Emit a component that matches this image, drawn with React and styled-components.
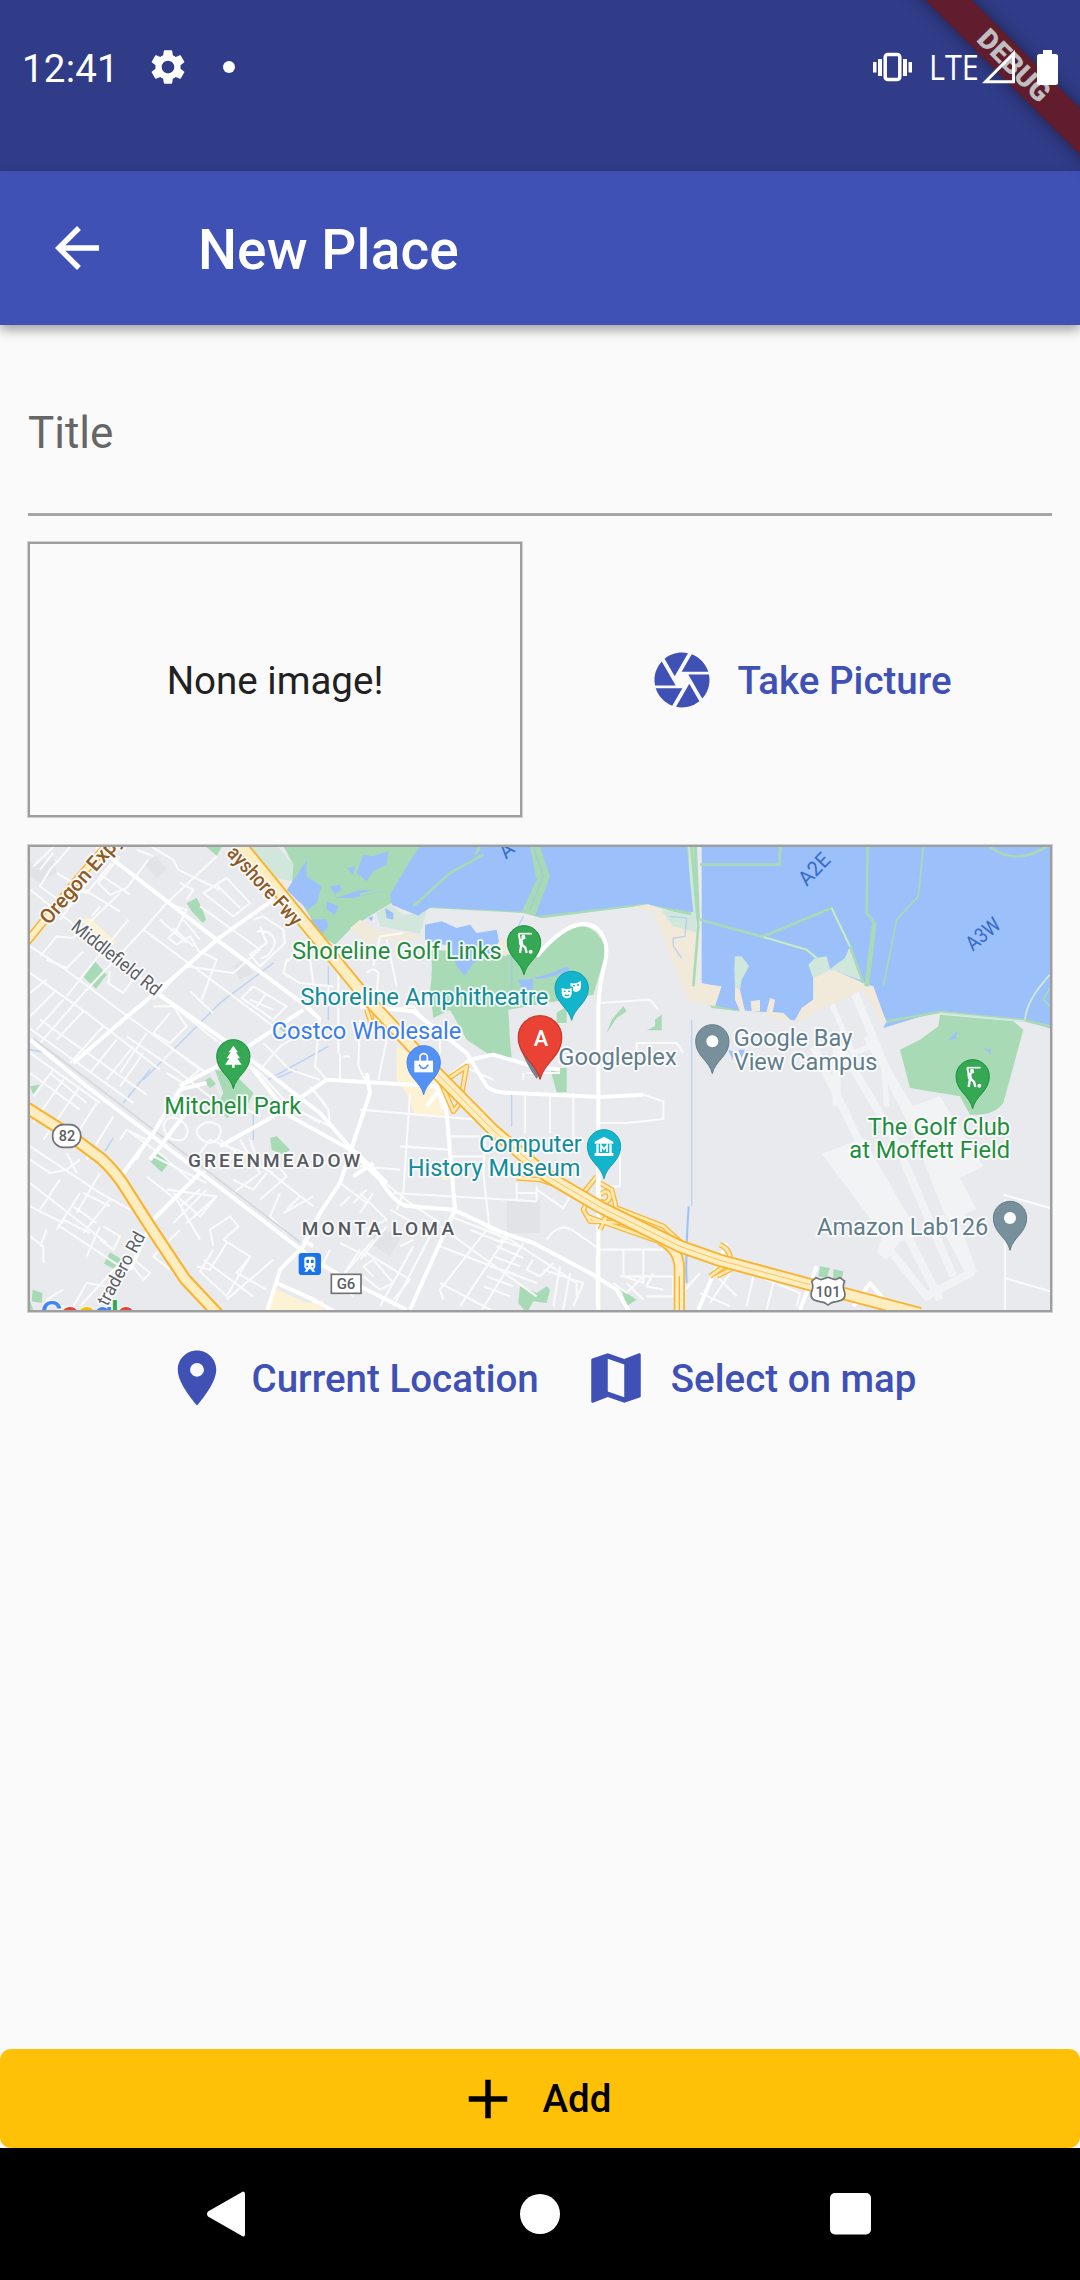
import React from 'react';
import styled, { createGlobalStyle } from 'styled-components';

const Global = createGlobalStyle`
  * { box-sizing: border-box; }
  body { margin: 0; background: #fafafa; font-family: Roboto, "Liberation Sans", sans-serif; }
`;

const Screen = styled.div`
  width: 1080px;
  height: 2280px;
  display: flex;
  flex-direction: column;
  background: #fafafa;
  position: relative;
  overflow: hidden;
`;

const StatusBar = styled.header`
  height: 171px;
  flex: none;
  background: #303c88;
  color: #fff;
  display: flex;
  justify-content: space-between;
  align-items: flex-start;
  padding: 45px 22px 0 22px;
`;

const StatusGroup = styled.div`
  display: flex;
  align-items: center;
  height: 44px;
  z-index: 2;
`;

const Clock = styled.span`
  font-size: 38.5px;
  line-height: 44px;
  width: 125px;
  padding-top: 4px;
  letter-spacing: 0.2px;
`;

const Network = styled.span`
  font-family: "Open Sans", "Noto Sans", sans-serif;
  font-size: 34px;
  line-height: 44px;
  width: 48px;
  margin-left: 17px;
  transform: scaleX(0.9);
  transform-origin: left center;
`;

const Dot = styled.i`
  width: 12px;
  height: 12px;
  margin-left: 34px;
  border-radius: 50%;
  background: #fff;
`;

const Ribbon = styled.div`
  position: absolute;
  z-index: 1;
  left: 864px;
  top: 49px;
  width: 300px;
  height: 33px;
  transform: rotate(45deg);
  display: flex;
  align-items: center;
  justify-content: center;
  background: #611c2e;
  box-shadow: 0 0 17px rgba(0, 0, 0, 0.42);
  color: #bfbfbf;
  font-size: 28px;
  line-height: 33px;
  font-weight: 900;
`;

const AppBar = styled.nav`
  height: 154px;
  flex: none;
  background: #3f51b5;
  color: #fff;
  display: flex;
  align-items: center;
  padding-left: 44px;
  gap: 88px;
  box-shadow: 0 5px 11px rgba(0, 0, 0, 0.36);
`;

const Heading = styled.h1`
  margin: 0;
  padding-top: 3px;
  font-size: 55px;
  line-height: 66px;
  font-weight: 500;
  letter-spacing: 0.1px;
`;

const Form = styled.main`
  flex: 1;
  min-height: 0;
  display: flex;
  flex-direction: column;
  padding: 27px 28px 0;
`;

const Field = styled.label`
  height: 164px;
  flex: none;
  display: block;
  padding-top: 55px;
  border-bottom: 3px solid #a6a6a6;
  font-size: 44px;
  line-height: 52px;
  color: #666;
`;

const ImageRow = styled.section`
  margin-top: 26px;
  height: 275px;
  flex: none;
  display: flex;
`;

const framed = `
  border: 2px solid #9e9e9e;
  box-shadow: 0 0 0 1px #cfcfcf;
`;

const Preview = styled.div`
  ${framed}
  width: 494px;
  display: flex;
  align-items: center;
  justify-content: center;
  padding-top: 2px;
  font-size: 38.5px;
  color: #212121;
`;

const Centered = styled.div`
  flex: 1;
  display: flex;
  align-items: center;
  justify-content: center;
  padding-left: 27px;
`;

const MapFrame = styled.section`
  ${framed}
  margin-top: 28px;
  height: 467px;
  flex: none;
  display: flex;
  svg { width: 100%; height: 100%; display: block; }
`;

const Actions = styled.section`
  height: 132px;
  flex: none;
  display: flex;
  justify-content: center;
  align-items: center;
  gap: 44px;
`;

const TextButton = styled.button`
  border: 0;
  padding: 0;
  background: none;
  display: flex;
  align-items: center;
  gap: 22px;
  font: 500 38.5px/46px Roboto, sans-serif;
  color: #3f51b5;
`;

const ButtonLabel = styled.span`
  padding-top: 2px;
`;

const AddButton = styled.button`
  height: 99px;
  flex: none;
  border: 0;
  border-radius: 11px;
  background: #ffc107;
  color: #000;
  display: flex;
  align-items: center;
  justify-content: center;
  gap: 22px;
  padding: 0 14px 0 0;
  font: 500 38.5px/46px Roboto, sans-serif;
`;

const SystemNav = styled.footer`
  height: 132px;
  flex: none;
  background: #000;
  display: grid;
  grid-template-columns: repeat(3, 310px);
  justify-content: center;
  align-items: center;
  justify-items: center;
`;

const BackKey = styled.svg`
  margin-right: 8px;
`;

const Glyph = ({ d, size = 66, label }) => (
  <svg width={size} height={size} viewBox="0 0 24 24" fill="currentColor" aria-label={label}>
    <path d={d} />
  </svg>
);

const ICON = {
  back: 'M20 11H7.83l5.59-5.59L12 4l-8 8 8 8 1.41-1.41L7.83 13H20v-2z',
  gear: 'M19.14 12.94c.04-.3.06-.61.06-.94 0-.32-.02-.64-.07-.94l2.03-1.58c.18-.14.23-.41.12-.61l-1.92-3.32c-.12-.22-.37-.29-.59-.22l-2.39.96c-.5-.38-1.03-.7-1.62-.94l-.36-2.54c-.04-.24-.24-.41-.48-.41h-3.84c-.24 0-.43.17-.47.41l-.36 2.54c-.59.24-1.13.57-1.62.94l-2.39-.96c-.22-.08-.47 0-.59.22L2.74 8.87c-.12.21-.08.47.12.61l2.03 1.58c-.05.3-.09.63-.09.94s.02.64.07.94l-2.03 1.58c-.18.14-.23.41-.12.61l1.92 3.32c.12.22.37.29.59.22l2.39-.96c.5.38 1.03.7 1.62.94l.36 2.54c.05.24.24.41.48.41h3.84c.24 0 .44-.17.47-.41l.36-2.54c.59-.24 1.13-.56 1.62-.94l2.39.96c.22.08.47 0 .59-.22l1.92-3.32c.12-.22.07-.47-.12-.61l-2.01-1.58zM12 15.6c-1.98 0-3.6-1.62-3.6-3.6s1.62-3.6 3.6-3.6 3.6 1.62 3.6 3.6-1.62 3.6-3.6 3.6z',
  camera: 'M9.4 10.5l4.77-8.26C13.47 2.09 12.75 2 12 2c-2.4 0-4.6.85-6.32 2.25l3.66 6.35.06-.1zM21.54 9c-.92-2.92-3.15-5.26-6-6.34L11.88 9h9.66zm.26 1h-7.49l.29.5 4.76 8.25C20.97 17.01 22 14.62 22 12c0-.69-.07-1.35-.2-2zM8.54 12l-3.9-6.75C3.01 7.03 2 9.39 2 12c0 .69.07 1.35.2 2h7.49l-1.15-2zm-6.08 3c.92 2.92 3.15 5.26 6 6.34L12.12 15H2.46zm11.27 0l-3.9 6.76c.7.15 1.42.24 2.17.24 2.4 0 4.6-.85 6.32-2.25l-3.66-6.35-.93 1.6z',
  pin: 'M12 2C8.13 2 5 5.13 5 9c0 5.25 7 13 7 13s7-7.75 7-13c0-3.87-3.13-7-7-7zm0 9.5c-1.38 0-2.5-1.12-2.5-2.5s1.12-2.5 2.5-2.5 2.5 1.12 2.5 2.5-1.12 2.5-2.5 2.5z',
  map: 'M20.5 3l-.16.03L15 5.1 9 3 3.36 4.9c-.21.07-.36.25-.36.48V20.5c0 .28.22.5.5.5l.16-.03L9 18.9l6 2.1 5.64-1.9c.21-.07.36-.25.36-.48V3.5c0-.28-.22-.5-.5-.5zM15 19l-6-2.11V5l6 2.11V19z',
  plus: 'M19 13h-6v6h-2v-6H5v-2h6V5h2v6h6v2z',
};

/* Map units are thirds of a screen pixel. */
const MINOR = [
  'M30 150L330 390L560 580L720 700', 'M100 40L60 90M40 80L100 22', 'M150 22L90 90L60 140L130 190',
  'M110 100L300 215M240 105L330 165M300 50L235 130L270 165L320 145L385 60', 'M275 70L200 160L165 150',
  'M200 130L120 240M300 160L160 295L110 290L60 350', 'M325 240L215 375L140 470M240 200L215 230',
  'M30 320L130 385L330 535L560 700', 'M30 400L200 520L420 690', 'M80 360L140 385L190 335',
  'M350 30L400 50M395 22L460 60L475 90L600 150', 'M590 50L440 190L370 270L200 450L60 610',
  'M620 115L550 160L640 230L690 190L620 115M590 135L660 205', 'M480 130L520 150L500 180',
  'M440 190L500 210L470 270L445 295L470 315L510 290L540 340L600 300M490 240L540 300M460 265L520 320',
  'M540 200L720 330L640 400L500 380M700 240L730 230L790 270L795 310L720 380L690 345L740 310L720 260M710 275Q760 270 765 310Q750 355 720 355',
  'M370 270L600 440L760 560M420 240L500 310', 'M400 500L460 500L500 560L450 610L400 580L450 520',
  'M550 340L590 360L545 480M500 380L400 480M510 455L580 520',
  'M700 440L800 500L760 540L665 475L700 440M690 480L760 510M740 460L710 500',
  'M800 360L790 400L840 430L940 440M860 320L800 365M870 360L880 430M955 320V640M925 440V500',
  'M190 515L110 600M130 480L50 570M250 560L150 670M290 600L210 700M340 620L260 720M370 640L300 740',
  'M20 560L340 790M60 540L380 765M30 640L240 790M30 700L180 810',
  'M320 590L480 700L580 780M380 580L300 700M430 660L460 630L540 690L490 730L440 700',
  'M270 395L265 430L310 460L345 410M110 450L30 530M80 420L30 460',
  'M180 740L70 900M130 720L40 850M230 790L160 900M100 690L40 770M280 830L200 960',
  'M30 920L120 980L240 1060L330 1110M30 1030L260 1210M30 960L90 1000L140 990L180 960M140 940L170 1000',
  'M120 1020L60 1110M180 1060L110 1170M240 1000L170 1120M270 1080L190 1180M190 1060L270 1100M160 1100L230 1150M130 1140L210 1180',
  'M240 1160L200 1250M30 1190L70 1220L70 1270M80 1170L60 1220M120 1160L300 1280M250 1160L300 1190L280 1230L240 1200',
  'M320 870L430 950L520 1030M300 900L320 870L380 900L350 960',
  'M430 860Q440 820 480 840Q520 870 490 900Q440 910 430 860M530 870Q560 830 600 860Q610 900 570 910Q530 900 530 870',
  'M600 900L650 940L600 990M540 940L570 900L700 950M660 900L720 1000L640 1060M690 900L720 980L760 1000',
  'M740 990L880 1100M760 960L800 1010L720 1080M550 1000L590 960M640 1020L700 1050L740 1000',
  'M440 1050L590 1070L540 1130L460 1060M380 1010L480 1090M470 1080L540 1200M560 1050L460 1150M400 950L560 1030',
  'M780 1060L750 1130L800 1180M880 1070L790 1120M840 1070L800 1110M590 1070L500 1150',
  'M580 1220L570 1170L630 1130L655 1160L610 1200L690 1250L620 1370L540 1295L580 1230M550 1260L700 1370',
  'M480 1170L400 1250L450 1290M530 1280L570 1290L620 1210M760 1260L620 1380M690 1250L650 1300L740 1350',
  'M330 1250L390 1300L370 1320L330 1270M300 1270L180 1400M260 1340L200 1330L160 1400M130 1350L80 1380L150 1410',
  'M30 1100L130 1150M90 700L200 790M480 1100L540 1050M590 640L720 700L810 800L930 860L925 810L870 740M800 790L900 850M880 750L920 800',
  'M730 610L810 690L900 720M720 690L780 620L830 590M660 800L720 830',
  'M850 500L900 540L885 680L920 720M960 640V720M970 650H990M1020 540L1015 680L1040 730M1100 600L1075 720',
  'M1040 400Q1060 380 1075 400L1070 470M1080 290L1150 280M1100 300L1130 440M1080 290L1060 380',
  'M1110 510L1180 500L1220 550L1320 600M1260 580V640L1245 700L1265 810M1520 700L1620 700M1510 700V720M1330 680L1420 720',
  'M1170 760L1150 1060L1130 1110M1020 810L1370 840M1140 920L1290 930M1020 980L1140 990M1120 1060L1550 1085M1290 890L1380 890M1290 950L1390 950',
  'M1400 840L1390 1000L1410 1180M1490 1030V1085M1550 1040V1085M1490 1060L1550 1060M1550 1050L1630 1105L1650 1070M1300 750L1200 740',
  'M1590 760V880M1660 760V900M1515 760V880M1850 630V610H1970L1990 640M1735 490L1890 480L1915 510',
  'M1730 850H1820L1930 838L1930 785L1870 765', 'M1700 930H1800V1040H1770',
  'M1260 1160L1550 1370M1290 1130L1470 1200L1670 1330V1370M1230 1190L1120 1400M1180 1220L1080 1400',
  'M1400 1170L1260 1350L1270 1380M1460 1190L1320 1400M1510 1210L1380 1420M1260 1330L1430 1420M1260 1220L1390 1270L1550 1330',
  'M1440 1200L1520 1230M1430 1220L1510 1255M1420 1250L1500 1280M1410 1280L1490 1305M1400 1310L1480 1340M1390 1340L1470 1370',
  'M1540 1260L1520 1290L1560 1310L1600 1270M1570 1290L1690 1330L1660 1400M1620 1280L1600 1400M1650 1300L1630 1410',
  'M1580 1200Q1620 1140 1670 1180L1740 1230H1930M1730 1250V1400M1810 1230V1310L1870 1330V1230M1800 1310H1960V1370H1880M1900 1300L1880 1340L1930 1350',
  'M1820 1330L1870 1380M1870 1310L1820 1360L1780 1330M1960 1390L2040 1300',
  'M1020 1060L1100 1140L1030 1170M1060 1000L1170 1090L1260 1150M1110 1110L1200 1160M1020 1120L1060 1060',
  'M1040 1240L1170 1320L1120 1380M1060 1310L1030 1280L1060 1260L1120 1330L1080 1350L1030 1310M1100 1160L1020 1260M1180 1200L1140 1220',
  'M960 1030L1040 1090M990 1070L960 1100M930 1230L900 1290M960 1210L1040 1250M1060 1200L950 1330L1000 1370M1020 1230L960 1320M920 1280L1050 1360M1000 1090L1040 1050',
  'M2190 1300L2340 1360L2330 1400M2130 1300L2070 1390M2090 1310L2150 1370M2200 1310L2180 1400M2260 1330L2240 1410M2040 1360L2130 1400M2100 1250L2090 1290',
  'M2950 1065L3090 1105M2955 1080V1410M2955 1315L3090 1355M1350 1170L1450 1210M1380 1150L1460 1200',
];
const MAJOR = [
  'M230 22L590 300L860 500L900 540', 'M760 180L590 300L430 440L310 540L160 670',
  'M30 600L200 740L530 990L830 1220L880 1260L1020 1340L1160 1410', 'M410 460L640 620L900 820L1040 980L1080 1020Q1130 1100 1170 1100L1300 1110L1450 1180L1540 1210L1710 1300L1790 1350L1830 1420',
  'M740 1420L780 1290L850 1220L900 1120L960 1030L1050 760L1040 700', 'M560 730L480 750L400 880L310 1000',
  'M520 790L390 960M540 1000L400 1140L330 1290M600 920L760 830L920 720L1250 740L1280 810',
  'M480 740L610 670L850 510M700 690L810 830L1010 940L1100 1030', 'M1255 700L1280 820L1305 1110L1170 1410',
  'M1220 800L1290 710L1350 660L1420 645L1540 680L1620 690', 'M1020 500L1180 515L1340 640L1400 740Q1420 760 1480 760L1740 772L1870 765',
  'M1550 350Q1660 220 1730 265Q1770 300 1755 370Q1740 420 1735 500V1420', 'M770 1330L880 1380L950 1420',
  'M2035 1410L2120 1210M2340 1410L2390 1280M2500 1400L2550 1330L2600 1390', 'M850 1200L880 1220M1000 1010L1060 970',
];
const FREEWAY = 'M650 0L850 245L1035 470L1250 700L1420 872L1580 1008L1740 1102L1980 1220L2100 1262L2370 1335L2700 1422';
const ELCAMINO = 'M10 798L140 880L245 958Q290 1000 320 1050L390 1160L495 1318L600 1430';
const RAMPS = [
  'M1040 510L1060 570M1060 490L1070 560', 'M1280 720L1340 680L1320 790L1300 815L1250 700', 'M1490 1015L1560 1020L1620 1040L1690 1060L1730 1010',
  'M1700 1090L1690 1110L1710 1145L1830 1150M1740 1170L1760 1130', 'M1740 1030L1775 1050L1790 1110L1750 1140M1740 1065Q1765 1045 1770 1070Q1765 1095 1740 1085',
  'M1500 930L1700 1080', 'M1790 1105L1930 1160L1990 1215M1700 1130L1930 1210', 'M2090 1310L2130 1290Q2140 1230 2100 1215M2070 1310L2125 1270',
];
const PARKS = [
  'M780 0L820 75L815 140L905 290L945 315L1000 260L1080 210L1115 190L1200 225L1230 205L1510 220L1565 236L1890 195L2040 240L2030 0Z',
  'M1232 330Q1240 390 1230 455L1240 535L1290 510L1340 600L1400 640L1475 655L1470 600L1465 510L1720 465L1760 330Q1730 250 1660 258Q1610 270 1560 350Z',
  'M2640 630L2700 600L2755 560L2760 525L2980 545L3010 570L2950 790Q2920 830 2850 825L2820 770L2670 745Z',
  'M225 365L260 405L228 447L190 412Z', 'M500 190L530 175L548 210L558 240L548 250L515 215Z', 'M560 22L590 48L605 22Z',
  'M585 690L640 700L700 760L680 800L620 835L595 790L610 760Z', 'M390 965L415 938L452 965L425 998Z', 'M750 895L770 890L810 930L790 945L755 930Z',
  'M270 1238L303 1258L290 1292L252 1272Z', 'M552 725L570 713L588 733L570 745Z', 'M38 1350L68 1360L65 1390L35 1385Z', 'M30 1385L40 1410H30Z',
  'M1500 1340L1550 1360L1580 1340L1590 1350L1580 1390L1540 1385L1520 1420L1495 1390Z', 'M1805 1350L1850 1380L1820 1400Z', 'M2400 1280L2430 1285L2420 1315L2395 1310ZM2440 1288L2470 1295L2465 1320L2440 1315Z',
  'M1760 580L1775 540L1810 500L1820 515L1790 535ZM1880 572L1905 560V540L1925 525V572Z', 'M1610 520L1640 500V550H1610ZM1590 685H1640V758H1610Z', 'M30 740L60 735L40 765Z', 'M770 560L800 545L795 580Z', 'M2070 495L2160 505L2158 515L2075 505Z',
];
const WATER = [
  'M1195 22L1110 165L1115 195L1195 228L1230 203L1505 216L1550 120L1530 22Z',
  'M1560 22L1590 110L1545 230L1870 192L2020 218L2000 22Z',
  'M2045 22V430L2085 440L2075 495L2150 510L2200 515L2290 520L2310 540L2335 545L2345 505L2380 480V415L2430 388L2530 430L2600 545L2590 565L2720 525L2760 515L3010 540L3100 570V0Z',
  'M800 150L830 110L860 60L860 110L905 140L890 190L865 210L830 180ZM870 240L920 238L925 260L905 285L880 265ZM920 185L955 200L945 225L920 210ZM930 140L960 135L965 150L945 165ZM980 85L1005 80L1000 105ZM1010 100L1030 45L1060 50L1105 35L1100 75L1060 95L1040 125ZM950 175L1020 150L1090 155L1000 175Z',
  'M1215 255L1265 245L1310 265L1350 255L1370 280L1430 270L1437 305L1420 340L1360 370L1335 408L1310 380L1290 320L1215 300Z',
  'M1095 205L1120 220L1120 240L1100 235ZM1495 420L1540 418L1538 450H1505ZM1545 412Q1580 410 1640 380L1650 390Q1600 415 1550 418ZM1020 262L1040 260L1035 272ZM1045 235L1060 230L1055 245Z',
  'M2785 600L2812 573L2808 598ZM2890 625L2910 628L2915 645Z', 'M2125 632L2140 635L2138 660ZM2155 630H2175L2165 655Z',
];

const PIN_PATH = 'M0 97C-8 58-50 45-50 0A50 50 0 1 1 50 0C50 45 8 58 0 97Z';
const PinMark = ({ x, y, fill, edge, s = 1, children }) => (
  <g transform={`translate(${x} ${y})`}>
    <path d={PIN_PATH} transform={`scale(${s})`} fill={fill} stroke={edge} strokeWidth="3" />
    {children}
  </g>
);
const Golfer = () => (
  <g stroke="#fff" strokeWidth="6" fill="none">
    <path d="M-18-26H24" strokeWidth="5" />
    <path d="M-16-24L-12-6L4-14" />
    <path d="M-10-8L-8 8" strokeWidth="12" />
    <path d="M-8 6L-12 32M-6 8L4 16L8 32" strokeWidth="7" />
    <circle cx="-2" cy="-17" r="3" />
    <circle cx="20" cy="28" r="3" />
  </g>
);

const GREEN = '#1e8e3e';
const TEAL = '#128c9c';
const SLATE = '#607d8b';
const LABELS = [
  ['Shoreline Golf Links', 816, 359, 629, GREEN], ['Shoreline Amphitheatre', 841, 497, 744, TEAL],
  ['Costco Wholesale', 755, 598, 569, '#3b7df0'], ['Googleplex', 1615, 676, 355, SLATE],
  ['Google Bay', 2141, 620, 356, SLATE], ['View Campus', 2141, 691, 431, SLATE],
  ['Mitchell Park', 433, 823, 411, GREEN], ['Computer', 1377, 937, 308, TEAL],
  ['History Museum', 1163, 1008, 518, TEAL], ['The Golf Club', 2543, 885, 427, GREEN],
  ['at Moffett Field', 2488, 956, 482, GREEN], ['Amazon Lab126', 2391, 1186, 514, SLATE],
  ['GREENMEADOW', 504, 982, 517, '#555a60', 57, 0, 500], ['MONTA LOMA', 845, 1185, 457, '#555a60', 57, 0, 500],
  ['Oregon Expy', 86, 258, 342, '#8c5a28', 62, -48.5, 500], ['Middlefield Rd', 150, 268, 325, '#5b6066', 57, 38.5],
  ['ayshore Fwy', 618, 42, 300, '#8c5a28', 62, 47.5, 500],
  ['tradero Rd', 262, 1402, 242, '#5b6066', 55, -61.5],
  ['A2E', 2360, 142, 108, '#346bc9', 62, -46], ['A3W', 2858, 336, 115, '#346bc9', 62, -40], ['A', 1458, 60, 40, '#346bc9', 60, -42],
];

const PlaceMap = () => (
  <svg viewBox="30 22 3060 1389" preserveAspectRatio="none" fontFamily="Roboto, sans-serif">
    <rect x="0" y="0" width="3100" height="1430" fill="#e8eaed" />
    <path fill="#e1e3e7" d="M60 70L100 50L110 100L60 130L30 110V70ZM370 70L410 50L440 90L410 115ZM640 380L670 360L700 400L660 420ZM1460 1080H1560V1180H1460ZM1060 1170L1150 1180L1110 1250L1050 1210ZM480 740L570 700L620 830L520 820Z" />
    <g fill="#f2f3f5">
      <path d="M2405 1002L2530 955L2700 1250L2640 1265L2600 1320L2570 1300L2600 1210L2560 1210Z" transform="translate(0 -60)" />
      <path d="M2650 810L2760 770L2890 980L2820 1015L2870 1110L2780 1140Z" />
    </g>
    <g stroke="#f2f3f5" fill="none" strokeWidth="24">
      <path d="M2380 620L2520 910L2760 1380M2460 620L2620 890L2800 1310M2540 590L2700 860L2860 1300M2425 470L2500 450L2620 740L2830 1140M2450 620L2450 800M2600 1220L2720 1370L2850 1300L2760 1130" />
      <path d="M2425 470L2500 640L2580 610M2590 660L2600 800" strokeWidth="16" />
    </g>
    <g fill="#a8dab5">{PARKS.map((d) => <path key={d} d={d} />)}</g>
    <g fill="#d2e7dc">
      <path d="M680 22H775L820 75L815 125L750 110Z" />
      <path d="M1070 220L1110 195L1150 225L1220 215L1200 282L1080 260ZM1925 210L2030 230L2025 280L1990 270L1950 260Z" />
      <path d="M2005 22L2015 280L2030 280L2020 22Z" />
    </g>
    <g fill="#9cc0fa">{WATER.map((d) => <path key={d} d={d} />)}</g>
    <g fill="#d0e7dc">
      <path d="M2145 350L2165 350L2187 380L2165 420L2160 450L2145 440L2143 390ZM2365 375L2385 355L2420 350L2430 388L2380 418ZM2430 388L2475 355L2490 320L2530 425Z" />
    </g>
    <g fill="#f1e9d9">
      <path d="M1835 203L1885 193L1925 215L1960 260L2035 280L2030 430L2105 440L2085 500L2005 485L1900 215ZM990 265L1020 240L1070 270L1200 285L1190 300H1060L1050 315Z" />
      <path d="M2380 415L2440 390L2530 430L2560 440L2600 550L2590 550L2530 450L2320 550L2345 505L2380 480ZM2145 440L2160 450L2175 515H2160L2145 480ZM2192 485L2220 480V515H2195ZM2240 515L2250 475L2265 480L2258 518L2290 520L2315 545L2240 530Z" />
      <path d="M745 105L810 130L800 155L775 150ZM1440 300L1460 295V350L1435 345Z" />
    </g>
    <g fill="#fdf2d4">
      <path d="M180 240L210 235L290 310L270 320ZM1130 620L1190 650L1260 720L1275 830H1185L1160 760L1130 720ZM1265 1005L1290 1020H1265ZM760 1345L860 1390L910 1380V1420H730Z" />
    </g>
    <g fill="none" stroke="#a8dab5" strokeWidth="8">
      <path d="M2012 0L2035 260L2020 440M2040 240L2230 292L2360 330L2390 355M2230 290L2435 205L2490 320L2530 430M2040 75H2278L2281 22M2543 0L2540 220L2563 250L2540 440" />
      <path d="M2600 545L2760 517L3015 542L3090 560M2910 22Q2990 80 3080 20" />
      <path d="M2710 22L2695 170L2630 240L2590 440M3015 540Q3020 480 3090 405M3090 445L3070 480L3090 500" strokeWidth="5" />
      <path d="M2563 250L2540 440" strokeWidth="14" />
      <path d="M1180 200L1290 100L1390 45M1160 22L1090 150L1020 165M1110 130L1195 22M1380 22L1365 45" />
    </g>
    <g fill="none" stroke="#cde8dc" strokeWidth="5"><path d="M2230 292L2360 330L2390 355M2435 205L2490 320M3015 540Q3020 480 3090 405M2760 520L3015 545" /></g>
    <g fill="none" stroke="#9cc0fa" strokeWidth="4">
      <path d="M30 630L80 640M370 720L600 490L760 370M310 790L390 690M745 720L925 620M760 720L830 690M925 380V540M1475 350V450M1475 760V860M2015 540V1100M1510 230L1495 260M1540 22L1570 110L1530 210M1950 230L2000 235L1995 290L1960 295L1960 320L1985 355M700 820V900M255 935L280 895" opacity=".6" />
      <path d="M2006 1100Q1996 1250 2000 1330" strokeWidth="6" />
    </g>
    <g fill="none" stroke="#fbfbfc" strokeWidth="6.5" strokeLinejoin="round" opacity=".95">{MINOR.map((d) => <path key={d} d={d} />)}</g>
    <path d="M40 596L210 725L540 977L840 1207" fill="none" stroke="#d5d7da" strokeWidth="5" />
    <g fill="none" stroke="#fff" strokeWidth="12" strokeLinejoin="round">{MAJOR.map((d) => <path key={d} d={d} />)}</g>
    <g fill="none" strokeLinejoin="round">
      <g stroke="#f9b83a" strokeWidth="16">{RAMPS.map((d) => <path key={d} d={d} />)}</g>
      <g stroke="#ffe9b5" strokeWidth="8">{RAMPS.map((d) => <path key={d} d={d} />)}</g>
      <path d="M1735 980V1085" stroke="#fff" strokeWidth="13" />
      <path d="M1978 1430V1290Q1980 1230 1920 1200" stroke="#f9b83a" strokeWidth="34" />
      <path d="M1978 1430V1290Q1980 1230 1920 1200" stroke="#ffedc2" strokeWidth="23" />
      {[['M10 320L180 110L285 -10', 26, 17], [ELCAMINO, 39, 26], [FREEWAY, 40, 29]].map(([d, outer, inner]) => (
        <g key={d}>
          <path d={d} stroke="#f9b42f" strokeWidth={outer} />
          <path d={d} stroke="#ffedc2" strokeWidth={inner} />
        </g>
      ))}
      <path d="M1250 700L1420 872L1580 1008L1740 1102L1980 1220L2100 1262L2370 1335" stroke="#fbc65b" strokeWidth="3" />
      <path d="M1978 1310V1420" stroke="#f9b42f" strokeWidth="4" />
    </g>
    {LABELS.map(([text, x, y, w, color, size = 69, angle = 0, weight = 400]) => (
      <text key={text} transform={`translate(${x} ${y}) rotate(${angle})`} fontSize={size} fontWeight={weight} fill={color}
        stroke={color === '#346bc9' ? 'none' : '#fff'} strokeOpacity=".85" strokeWidth="11" strokeLinejoin="round" paintOrder="stroke"
        textLength={w} lengthAdjust={weight === 500 && angle === 0 ? 'spacing' : 'spacingAndGlyphs'}>{text}</text>
    ))}
    <PinMark x={640} y={650} fill="#34a853" edge="#1e8e3e">
      <path d="M0-32L14-12H8L20 6H12L25 25H4V34H-4V25H-25L-12 6H-20L-8-12H-14Z" fill="#fff" />
    </PinMark>
    <PinMark x={1512} y={308} fill="#34a853" edge="#1e8e3e"><Golfer /></PinMark>
    <PinMark x={2858} y={710} fill="#34a853" edge="#1e8e3e"><Golfer /></PinMark>
    <PinMark x={1655} y={445} fill="#12b5cb" edge="#129eaf">
      <path d="M-30 0Q-14 6 0 0V18Q-3 31-14 31T-30 18ZM-4-15Q12-10 28-22V-3Q26 10 12 12L4 8V-4L-3-5Z" fill="#fff" />
      <path d="M-24 10H-18M-11 10H-5M-21 20Q-14 26-8 20M4-7H10M16-9H22" stroke="#12b5cb" strokeWidth="4" fill="none" />
    </PinMark>
    <PinMark x={1211} y={668} fill="#5491f5" edge="#4285f4">
      <path d="M-28-5H28V30H-28Z" fill="#fff" />
      <path d="M-11-4V-16A11 10 0 0 1 11-16V-4" fill="none" stroke="#fff" strokeWidth="5" />
      <path d="M-14 7Q0 30 14 7" fill="none" stroke="#5491f5" strokeWidth="5" />
    </PinMark>
    <PinMark x={1752} y={920} fill="#12b5cb" edge="#129eaf">
      <path d="M-28-8V-14L0-29L28-14V-8ZM-23-6H-16V20H-23ZM16-6H23V20H16ZM-28 20H28V29H-28Z" fill="#fff" />
      <path d="M-9 17V-3L0 9L9-3V17" fill="none" stroke="#fff" strokeWidth="5" />
    </PinMark>
    {[[2077, 605], [2970, 1135]].map(([x, y]) => (
      <PinMark key={x} x={x} y={y} fill="#78909c" edge="#607d8b"><circle r="18" fill="#fff" /></PinMark>
    ))}
    <path d="M1500 620Q1515 670 1550 718L1565 690Z" fill="#7c8289" />
    <PinMark x={1560} y={593} s={1.3} fill="#ea4335" edge="#c5372c">
      <text x="3" y="25" textAnchor="middle" fontSize="66" fontWeight="500" fill="#fff">A</text>
    </PinMark>
    <g textAnchor="middle" fill="#5b6066" fontWeight="500">
      <rect x="98" y="855" width="84" height="68" rx="32" fill="#fff" stroke="#6f7378" strokeWidth="5" />
      <text x="141" y="904" fontSize="43">82</text>
      <rect x="934" y="1304" width="89" height="57" fill="#fff" stroke="#6f7378" strokeWidth="5" />
      <text x="978" y="1349" fontSize="45">G6</text>
      <path d="M2375 1325L2388 1314L2403 1320Q2414 1317 2424 1313Q2434 1317 2446 1320L2460 1314L2474 1325Q2466 1340 2474 1358Q2480 1382 2448 1386Q2434 1387 2424 1396Q2414 1387 2400 1386Q2368 1382 2374 1358Q2382 1340 2375 1325Z" fill="#fff" stroke="#6f7378" strokeWidth="5" />
      <text x="2424" y="1372" fontSize="44">101</text>
    </g>
    <rect x="836" y="1240" width="67" height="66" rx="10" fill="#1a73e8" />
    <path d="M853 1259Q853 1251 861 1251H878Q886 1251 886 1259V1281Q886 1287 880 1288L886 1296H877L872 1289H867L862 1296H853L859 1288Q853 1287 853 1281Z" fill="#fff" />
    <path d="M859 1260H867V1270H859ZM873 1260H881V1270H873ZM859 1278H864V1283H859ZM875 1278H880V1283H875Z" fill="#1a73e8" />
    <text x="60" y="1455" fontSize="102" fontWeight="500" textLength="284" stroke="#fff" strokeWidth="5" paintOrder="stroke">
      <tspan fill="#4285f4">G</tspan><tspan fill="#ea4335">o</tspan><tspan fill="#fbbc04">o</tspan><tspan fill="#4285f4">g</tspan><tspan fill="#34a853">l</tspan><tspan fill="#ea4335">e</tspan>
    </text>
  </svg>
);

export default function App() {
  return (
    <Screen>
      <Global />
      <StatusBar>
        <StatusGroup>
          <Clock>12:41</Clock>
          <Glyph d={ICON.gear} size={42} label="Settings" />
          <Dot />
        </StatusGroup>
        <StatusGroup>
          <svg width="39" height="30" viewBox="0 0 39 30" fill="#fff">
            <rect x="12.2" y="2.5" width="14.6" height="25" rx="2.5" fill="none" stroke="#fff" strokeWidth="3.5" />
            <path d="M0 10H3.5V20.5H0ZM5 7H9V24H5ZM30 7H34V24H30ZM35.5 10H39V20.5H35.5Z" />
          </svg>
          <Network>LTE</Network>
          <svg width="35" height="34" viewBox="0 0 35 34" style={{ marginLeft: 4 }}>
            <path d="M4.5 31.8H32.5V3.5Z" fill="none" stroke="#fff" strokeWidth="3" />
          </svg>
          <svg width="21" height="35" viewBox="0 0 21 35" style={{ marginLeft: 21 }} fill="#fff">
            <path d="M6 0H15V4H18.5Q21 4 21 6.5V32.5Q21 35 18.5 35H2.5Q0 35 0 32.5V6.5Q0 4 2.5 4H6Z" />
          </svg>
        </StatusGroup>
      </StatusBar>
      <Ribbon>DEBUG</Ribbon>
      <AppBar>
        <Glyph d={ICON.back} label="Back" />
        <Heading>New Place</Heading>
      </AppBar>
      <Form>
        <Field>Title</Field>
        <ImageRow>
          <Preview>None image!</Preview>
          <Centered>
            <TextButton><Glyph d={ICON.camera} /><ButtonLabel>Take Picture</ButtonLabel></TextButton>
          </Centered>
        </ImageRow>
        <MapFrame><PlaceMap /></MapFrame>
        <Actions>
          <TextButton><Glyph d={ICON.pin} /><ButtonLabel>Current Location</ButtonLabel></TextButton>
          <TextButton><Glyph d={ICON.map} /><ButtonLabel>Select on map</ButtonLabel></TextButton>
        </Actions>
      </Form>
      <AddButton><Glyph d={ICON.plus} />Add</AddButton>
      <SystemNav>
        <BackKey width="40" height="46" viewBox="0 0 40 46" fill="#fff"><path d="M37 .5Q39 .5 39 3V43Q39 46 37 45.5L2 25.5Q0 23 2 20.5Z" /></BackKey>
        <svg width="40" height="40" viewBox="0 0 40 40" fill="#fff"><circle cx="20" cy="20" r="20" /></svg>
        <svg width="41" height="42" viewBox="0 0 41 42" fill="#fff"><rect width="41" height="41.5" rx="5" /></svg>
      </SystemNav>
    </Screen>
  );
}
